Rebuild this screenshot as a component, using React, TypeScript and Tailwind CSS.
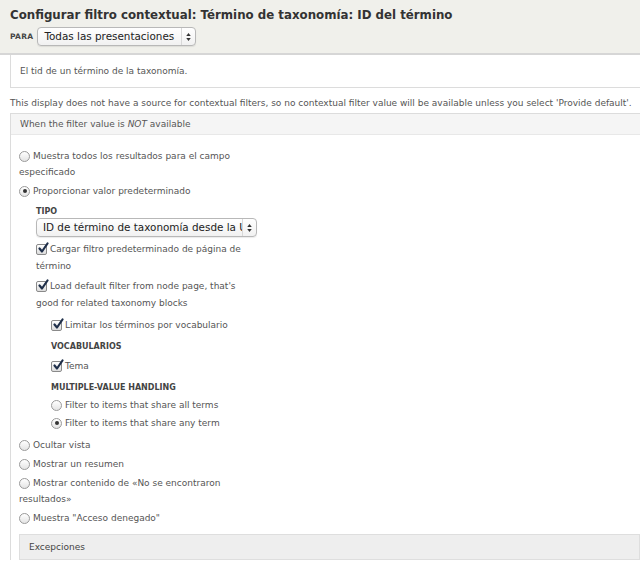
import React from "react";

function Radio({ checked = false }: { checked?: boolean }) {
    return (
        <span className="inline-flex w-[11px] h-[11px] shrink-0 rounded-full border border-[#9a9a9a] bg-gradient-to-b from-white to-[#e4e4e4] items-center justify-center mr-[3px]">
            {checked && <span className="w-[4px] h-[4px] rounded-full bg-[#333]" />}
        </span>
    );
}

function Check() {
    return (
        <span className="relative inline-block w-[11px] h-[11px] shrink-0 rounded-[2px] border border-[#8a8a8a] bg-gradient-to-b from-white to-[#dcdcdc] mr-[3px]">
            <svg viewBox="0 0 12 12" className="absolute left-[0px] top-[-3px] w-[12px] h-[12px]">
                <path d="M2.5 6.5 L5 9.5 L10.5 1.5" fill="none" stroke="#1f2f4a" strokeWidth="2.2" strokeLinecap="round" strokeLinejoin="round" />
            </svg>
        </span>
    );
}

function Arrows() {
    return (
        <span className="flex flex-col items-center justify-center gap-[2px] w-[14px] h-full border-l border-[#d8d8d8]">
            <svg viewBox="0 0 6 4" className="w-[5px] h-[3px]"><path d="M0 4 L3 0 L6 4 Z" fill="#333" /></svg>
            <svg viewBox="0 0 6 4" className="w-[5px] h-[3px]"><path d="M0 0 L3 4 L6 0 Z" fill="#333" /></svg>
        </span>
    );
}

function Select({ label, width }: { label: string; width: string }) {
    return (
        <div className={`flex items-center h-[19px] rounded-[4px] border border-[#b8b8b8] bg-gradient-to-b from-white to-[#f1f1f1] shadow-[0_1px_1px_rgba(0,0,0,0.08)] ${width}`}>
            <span className="flex-1 overflow-hidden whitespace-nowrap pl-[6px] pr-[3px] text-[10.4px] text-[#222] leading-[19px]">{label}</span>
            <Arrows />
        </div>
    );
}

function Option({ checked, lines }: { checked?: boolean; lines: string[] }) {
    return (
        <div className="text-[9px] leading-[16px]">
            <div className="flex items-center">
                <Radio checked={checked} />
                <span>{lines[0]}</span>
            </div>
            {lines.slice(1).map((l) => (
                <div key={l}>{l}</div>
            ))}
        </div>
    );
}

function CheckItem({ lines }: { lines: string[] }) {
    return (
        <div className="text-[9px] leading-[17px]">
            <div className="flex items-center">
                <Check />
                <span>{lines[0]}</span>
            </div>
            {lines.slice(1).map((l) => (
                <div key={l}>{l}</div>
            ))}
        </div>
    );
}

export default function App() {
    return (
        <div className="w-[640px] h-[563px] overflow-hidden bg-white font-['DejaVu_Sans',sans-serif] text-[#555]">
            <div className="h-[55px] bg-[#f0f0eb] border-b-2 border-[#d6d6d6] px-[10px] pt-[5px]">
                <h1 className="text-[11.8px] font-bold text-[#333] leading-[20px]">
                    Configurar filtro contextual: Término de taxonomía: ID del término
                </h1>
                <div className="flex items-center gap-[4px] mt-[2px]">
                    <span className="text-[7.5px] font-bold text-[#444] tracking-[0.3px]">PARA</span>
                    <Select label="Todas las presentaciones" width="w-[159px]" />
                </div>
            </div>

            <div className="ml-[10px] h-[33px] border-l border-b border-[#dcdcdc] pl-[9px] pt-[9px] text-[9px] leading-[14px]">
                El tid de un término de la taxonomía.
            </div>

            <div className="px-[10px] pt-[8px] pb-[3px] text-[9px] leading-[14px] whitespace-nowrap">
                This display does not have a source for contextual filters, so no contextual filter value will be available unless you select 'Provide default'.
            </div>

            <div className="ml-[10px] border-l border-t border-[#dcdcdc]">
                <div className="h-[21px] bg-[#f5f5f5] border-b border-[#e8e8e8] pl-[9px] text-[9px] leading-[21px]">
                    When the filter value is <em>NOT</em> available
                </div>

                <div className="pl-[8px] pt-[13px] flex flex-col gap-[3px]">
                    <Option lines={["Muestra todos los resultados para el campo", "especificado"]} />
                    <Option checked lines={["Proporcionar valor predeterminado"]} />

                    <div className="pl-[17px] pt-[3px] flex flex-col">
                        <div className="text-[8px] font-bold text-[#444] leading-[14px]">TIPO</div>
                        <div className="-mt-[1px]">
                            <Select label="ID de término de taxonomía desde la URL" width="w-[221px]" />
                        </div>
                        <div className="mt-[4px] flex flex-col gap-[3px]">
                            <CheckItem lines={["Cargar filtro predeterminado de página de", "término"]} />
                            <CheckItem lines={["Load default filter from node page, that's", "good for related taxonomy blocks"]} />
                        </div>
                        <div className="pl-[15px] pt-[5px] flex flex-col">
                            <CheckItem lines={["Limitar los términos por vocabulario"]} />
                            <div className="text-[8px] font-bold text-[#444] leading-[14px] mt-[6px]">VOCABULARIOS</div>
                            <div className="mt-[4px]">
                                <CheckItem lines={["Tema"]} />
                            </div>
                            <div className="text-[8px] font-bold text-[#444] leading-[14px] mt-[6px]">MULTIPLE-VALUE HANDLING</div>
                            <div className="mt-[2px] flex flex-col gap-[2px]">
                                <Option lines={["Filter to items that share all terms"]} />
                                <Option checked lines={["Filter to items that share any term"]} />
                            </div>
                        </div>
                    </div>

                    <div className="mt-[3px] flex flex-col gap-[3px]">
                        <Option lines={["Ocultar vista"]} />
                        <Option lines={["Mostrar un resumen"]} />
                        <Option lines={["Mostrar contenido de «No se encontraron", "resultados»"]} />
                        <Option lines={['Muestra "Acceso denegado"']} />
                    </div>

                    <div className="mt-[5px] h-[26px] bg-[#eeeeee] border border-[#dedede] pl-[9px] text-[9px] text-[#444] leading-[24px]">
                        Excepciones
                    </div>
                </div>
            </div>
        </div>
    );
}
